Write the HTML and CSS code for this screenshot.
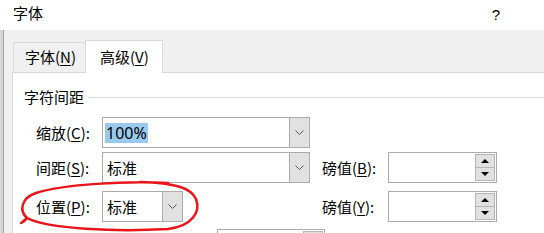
FILE: index.html
```html
<!DOCTYPE html>
<html lang="zh-CN">
	<head>
		<meta charset="UTF-8" />
		<meta name="viewport" content="width=device-width, initial-scale=1.0" />
		<title>字体</title>
		<link rel="stylesheet" href="styles.css">
	</head>
	<body>
		<div class="window">
			<div class="titlebar">
				<span class="title">字体</span>
				<span class="help">?</span>
			</div>
			<div class="dialog">
				<div class="tabs">
					<div class="tab">字体(<u>N</u>)</div>
					<div class="tab active">高级(<u>V</u>)</div>
				</div>
				<div class="panel">
					<div class="group-title">
						<span>字符间距</span>
						<span class="rule"></span>
					</div>

					<div class="row row-scale">
						<span class="lbl">缩放(<u>C</u>):</span>
						<div class="combo">
							<span class="value"><span class="sel">100%</span></span>
							<span class="drop">
								<svg width="9" height="5" viewBox="0 0 9 5"><polyline points="0.5,0.5 4.5,4.5 8.5,0.5" fill="none" stroke="#555" stroke-width="1" /></svg>
							</span>
						</div>
					</div>

					<div class="row row-spacing">
						<span class="lbl">间距(<u>S</u>):</span>
						<div class="combo">
							<span class="value">标准</span>
							<span class="drop">
								<svg width="9" height="5" viewBox="0 0 9 5"><polyline points="0.5,0.5 4.5,4.5 8.5,0.5" fill="none" stroke="#555" stroke-width="1" /></svg>
							</span>
						</div>
						<span class="lbl lbl-right">磅值(<u>B</u>):</span>
						<div class="spin">
							<div class="spin-btns">
								<span class="spin-btn"><i class="up"></i></span>
								<span class="spin-btn"><i class="down"></i></span>
							</div>
						</div>
					</div>

					<div class="row row-position">
						<span class="lbl">位置(<u>P</u>):</span>
						<div class="combo-cell">
							<div class="combo small">
								<span class="value">标准</span>
								<span class="drop">
									<svg width="9" height="5" viewBox="0 0 9 5"><polyline points="0.5,0.5 4.5,4.5 8.5,0.5" fill="none" stroke="#555" stroke-width="1" /></svg>
								</span>
							</div>
						</div>
						<span class="lbl lbl-right">磅值(<u>Y</u>):</span>
						<div class="spin">
							<div class="spin-btns">
								<span class="spin-btn"><i class="up"></i></span>
								<span class="spin-btn"><i class="down"></i></span>
							</div>
						</div>
					</div>

					<div class="row row-kerning">
						<div class="spin narrow">
							<div class="spin-btns">
								<span class="spin-btn"></span>
							</div>
						</div>
					</div>
				</div>
			</div>

			<!-- hand drawn red circle over the position row -->
			<svg class="mark" width="544" height="233" viewBox="0 0 544 233">
				<path d="M 168 183 C 125 181, 65 184, 36 193 C 21 198, 19 211, 27 218 C 48 229, 115 232, 168 229 C 192 226, 201 212, 196 199 C 191 188, 176 183, 140 182" fill="none" stroke="#e8141a" stroke-width="2.5" stroke-linecap="round" />
				<path d="M 27 218 C 25 220, 23 222, 21 223" fill="none" stroke="#e8141a" stroke-width="2.5" stroke-linecap="round" />
			</svg>
		</div>
	</body>
</html>
```

FILE: styles.css
```css
* {
	box-sizing: border-box;
}

body {
	margin: 0;
	font-family: "Noto Sans CJK SC", "Noto Sans", sans-serif;
	font-size: 15px;
	color: #000;
	background-color: #f0f0f0;
}

u {
	text-decoration-thickness: 1px;
	text-underline-offset: 2px;
}

.window {
	position: relative;
	width: 544px;
	height: 233px;
	overflow: hidden;
	background-color: #f0f0f0;
}

.titlebar {
	display: flex;
	justify-content: space-between;
	height: 30px;
	padding: 3px 44px 0 13px;
	line-height: 20px;
	background-color: #fff;
}

.help {
	font-family: "Liberation Sans", sans-serif;
	font-size: 15px;
	margin-top: 2px;
}

.dialog {
	height: 203px;
	padding: 10px 0 0 9px;
	border-left: 3px solid #d6d6d6;
	box-shadow: inset 1px 0 0 #a3a3a3;
}

.tabs {
	display: flex;
	align-items: flex-end;
	height: 32px;
	padding-left: 1px;
}

.tab {
	width: 73px;
	height: 30px;
	padding-left: 11px;
	line-height: 28px;
	border: 1px solid #d9d9d9;
	border-bottom: none;
}

.tab.active {
	position: relative;
	z-index: 1;
	width: 78px;
	height: 33px;
	margin-left: -1px;
	margin-bottom: -1px;
	padding-left: 14px;
	line-height: 31px;
	background-color: #fff;
}

.panel {
	width: 560px;
	height: 200px;
	padding-left: 11px;
	background-color: #fff;
	border: 1px solid #d9d9d9;
}

.group-title {
	display: flex;
	align-items: center;
	height: 20px;
	margin-top: 14px;
	line-height: 20px;
}

.rule {
	flex: 1;
	height: 1px;
	margin-left: 4px;
	background-color: #dcdcdc;
}

.row {
	display: flex;
	align-items: center;
	height: 31px;
	padding-left: 12px;
}

.row-scale {
	margin-top: 10px;
}

.row-spacing {
	margin-top: 4px;
}

.row-position {
	margin-top: 8px;
}

.row-kerning {
	margin-top: 7px;
	padding-left: 193px;
	align-items: flex-start;
}

.lbl {
	width: 66px;
	line-height: 20px;
}

.lbl-right {
	margin-left: 12px;
}

.combo-cell {
	width: 208px;
}

.combo {
	display: flex;
	width: 208px;
	height: 31px;
	background-color: #fff;
	border: 1px solid #ababab;
}

.combo.small {
	width: 81px;
}

.value {
	flex: 1;
	padding-left: 4px;
	line-height: 29px;
}

.sel {
	display: inline-block;
	margin-left: -2px;
	padding: 0 1px;
	line-height: 20px;
	font-family: "Noto Sans", sans-serif;
	font-size: 16px;
	background-color: #99c9ef;
}

.drop {
	display: flex;
	align-items: center;
	justify-content: center;
	width: 20px;
	background-color: #e1e1e1;
	border-left: 1px solid #ababab;
}

.spin {
	display: flex;
	justify-content: flex-end;
	width: 109px;
	height: 31px;
	padding: 1px;
	background-color: #fff;
	border: 1px solid #ababab;
}

.spin.narrow {
	width: 108px;
}

.spin-btns {
	display: flex;
	flex-direction: column;
	width: 20px;
}

.spin-btn {
	display: flex;
	flex: 1;
	align-items: center;
	justify-content: center;
	background-color: #e1e1e1;
	border: 1px solid #b4b4b4;
}

.spin-btn + .spin-btn {
	border-top: none;
}

.up {
	width: 0;
	height: 0;
	border-left: 4px solid transparent;
	border-right: 4px solid transparent;
	border-bottom: 4px solid #000;
}

.down {
	width: 0;
	height: 0;
	border-left: 4px solid transparent;
	border-right: 4px solid transparent;
	border-top: 4px solid #000;
}

.mark {
	position: absolute;
	left: 0;
	top: 0;
	pointer-events: none;
}
```
